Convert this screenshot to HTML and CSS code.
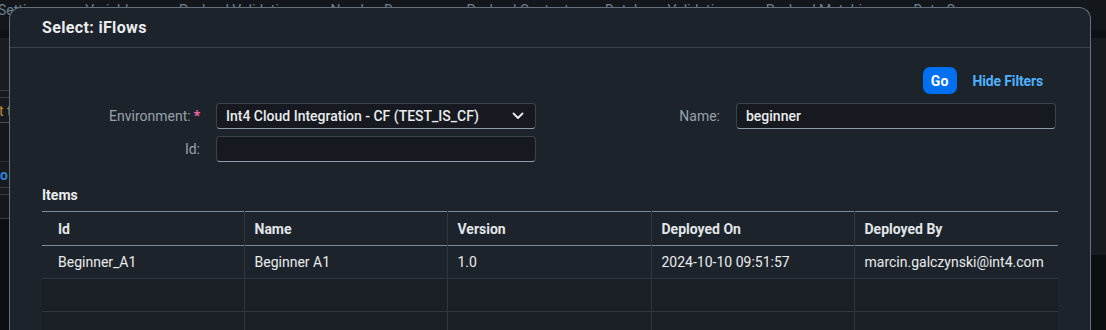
FILE: index.html
```html
<!DOCTYPE html>
<html lang="en">
<head>
<meta charset="utf-8">
<title>Select: iFlows</title>
<link rel="stylesheet" href="styles.css">
</head>
<body>
<div class="page">
  <div class="tabs">
    <span class="tab">Settings</span>
    <span class="tab">Variables</span>
    <span class="tab">Payload Validation</span>
    <span class="tab">Number Ranges</span>
    <span class="tab">Payload Content</span>
    <span class="tab">Database Validation</span>
    <span class="tab">Payload Matching</span>
    <span class="tab">Data Compare</span>
  </div>
  <div class="band"></div>
  <div class="page-body">
    <div class="left-panel">
      <div class="lp-row lp-a"><span class="lp-text lp-white">E</span></div>
      <div class="lp-row lp-b"></div>
      <div class="lp-row lp-c"><span class="lp-text lp-orange">t t</span></div>
      <div class="lp-row lp-d"></div>
      <div class="lp-row lp-e"><span class="lp-text lp-blue">o</span></div>
      <div class="lp-row lp-f"></div>
      <div class="lp-row lp-g"></div>
      <div class="lp-row lp-h"></div>
    </div>
    <div class="main-area">
      <div class="main-top"></div>
      <div class="main-bottom"></div>
    </div>
  </div>
</div>

<div class="dialog">
  <div class="dialog-header">
    <h1 class="dialog-title">Select: iFlows</h1>
  </div>
  <div class="dialog-content">
    <div class="filter-toolbar">
      <button class="btn-go">Go</button>
      <a class="link-btn">Hide Filters</a>
    </div>
    <div class="filter-grid">
      <div class="form-item">
        <label class="form-label">Environment:<span class="req">*</span></label>
        <div class="field select">
          <span class="field-text">Int4 Cloud Integration - CF (TEST_IS_CF)</span>
          <svg class="chev" width="12" height="8" viewBox="0 0 12 8"><path d="M1.5 1.5 L6 6 L10.5 1.5" fill="none" stroke="#eaecee" stroke-width="1.8" stroke-linecap="round" stroke-linejoin="round"/></svg>
        </div>
      </div>
      <div class="form-item">
        <label class="form-label">Name:</label>
        <div class="field"><span class="field-text">beginner</span></div>
      </div>
      <div class="form-item">
        <label class="form-label">Id:</label>
        <div class="field"></div>
      </div>
    </div>

    <h2 class="items-title">Items</h2>
    <table class="items-table">
      <colgroup>
        <col class="c1"><col class="c2"><col class="c3"><col class="c4"><col class="c5">
      </colgroup>
      <thead>
        <tr>
          <th class="first">Id</th>
          <th>Name</th>
          <th>Version</th>
          <th>Deployed On</th>
          <th>Deployed By</th>
        </tr>
      </thead>
      <tbody>
        <tr>
          <td class="first">Beginner_A1</td>
          <td>Beginner A1</td>
          <td>1.0</td>
          <td>2024-10-10 09:51:57</td>
          <td>marcin.galczynski@int4.com</td>
        </tr>
        <tr class="empty">
          <td class="first"></td><td></td><td></td><td></td><td></td>
        </tr>
        <tr class="empty">
          <td class="first"></td><td></td><td></td><td></td><td></td>
        </tr>
      </tbody>
    </table>
  </div>
</div>
</body>
</html>
```

FILE: styles.css
```css
* { box-sizing: border-box; }

html, body {
  margin: 0;
  padding: 0;
  width: 1106px;
  height: 330px;
  overflow: hidden;
  background: #12161b;
  font-family: Roboto, "Liberation Sans", Arial, sans-serif;
  font-size: 14px;
  color: #eaecee;
}

/* ---------- background page ---------- */
.page {
  width: 1106px;
  height: 330px;
  display: flex;
  flex-direction: column;
}

.tabs {
  height: 30px;
  display: flex;
  gap: 36px;
  margin-left: -2px;
  background: #13171c;
  white-space: nowrap;
  overflow: hidden;
}

.tab {
  font-size: 14px;
  line-height: 14px;
  color: #6f7f90;
  padding-top: 3px;
}

.band {
  height: 8px;
  background: #0d1014;
}

.page-body {
  flex: 1;
  display: flex;
}

.left-panel {
  width: 60px;
  display: flex;
  flex-direction: column;
  background: #171b20;
}

.lp-row {
  border-bottom: 1px solid #353c44;
  overflow: hidden;
}
.lp-a { height: 53px; background: #191d22; }
.lp-b { height: 7px; }
.lp-c { height: 25px; border-bottom-color: #4a525c; }
.lp-d { height: 39px; background: #14181c; border-bottom-color: #2a3038; }
.lp-e { height: 26px; }
.lp-f { height: 7px; }
.lp-g { height: 24px; background: #14181c; }
.lp-h { height: 36px; background: #0c0f12; border-bottom: 0; flex: 1; }

.lp-text {
  display: block;
  font-size: 14px;
  line-height: 16px;
}
.lp-a .lp-text { padding: 33px 0 0 9px; }
.lp-c .lp-text { padding: 5px 0 0 0; margin-left: -1px; }
.lp-e .lp-text { padding: 5px 0 0 0; }
.lp-white { color: #c5d1dc; }
.lp-orange { color: #c0893a; }
.lp-blue { color: #2f84d6; font-weight: 700; }

.main-area {
  flex: 1;
  display: flex;
  flex-direction: column;
}
.main-top { height: 217px; background: #171b20; }
.main-bottom { flex: 1; background: #0c0f12; }

/* ---------- dialog ---------- */
.dialog {
  position: absolute;
  left: 9px;
  top: 7px;
  width: 1082px;
  height: 323px;
  overflow: hidden;
  background: #1d232a;
  border: 1px solid #66707b;
  border-bottom: 0;
  border-radius: 12px 12px 0 0;
}

.dialog-header {
  height: 40px;
  display: flex;
  align-items: center;
  padding-left: 32px;
  border-bottom: 1px solid #3a424c;
}

.dialog-title {
  margin: 0;
  font-size: 16px;
  letter-spacing: 0.35px;
  font-weight: 700;
  color: #eaecee;
}

.dialog-content {
  padding: 19px 31px 0 32px;
}

.filter-toolbar {
  display: flex;
  justify-content: flex-end;
  align-items: center;
  gap: 15px;
  padding-right: 16px;
  height: 27px;
}

.btn-go {
  width: 34px;
  height: 27px;
  border: 0;
  border-radius: 7px;
  background: #0070f2;
  color: #ffffff;
  font-family: inherit;
  font-size: 14px;
  font-weight: 700;
  padding: 0;
  margin-right: 1px;
}

.link-btn {
  color: #4db1ff;
  font-weight: 700;
  font-size: 14px;
  letter-spacing: -0.15px;
}

.filter-grid {
  margin-top: 9px;
  display: grid;
  grid-template-columns: 498px 498px;
  column-gap: 22px;
  row-gap: 7px;
}

.form-item {
  display: flex;
  align-items: center;
  padding-right: 4px;
}

.form-label {
  flex: 1;
  text-align: right;
  padding-right: 16px;
  color: #96a1ad;
  font-size: 14px;
}

.req {
  color: #f36bab;
  font-weight: 700;
  margin-left: 3px;
}

.field {
  width: 320px;
  height: 26px;
  display: flex;
  align-items: center;
  padding: 0 10px 0 9px;
  background: #161a20;
  border: 1px solid #3b434d;
  border-bottom-color: #8f9caa;
  border-radius: 4px;
}

.field-text {
  flex: 1;
  color: #eaecee;
  font-size: 14px;
  font-weight: 500;
  white-space: nowrap;
}

.select .chev { margin-right: 1px; }

.items-title {
  margin: 25px 0 0 0;
  height: 24px;
  font-size: 14px;
  font-weight: 700;
  color: #eaecee;
}

.items-table {
  width: 1016px;
  border-collapse: collapse;
  table-layout: fixed;
}

col.c1 { width: 202px; }
col.c2 { width: 203px; }
col.c3 { width: 204px; }
col.c4 { width: 203px; }
col.c5 { width: 204px; }

.items-table thead tr {
  height: 34px;
  border-top: 1px solid #7d8a98;
  border-bottom: 1px solid #7d8a98;
}

.items-table th {
  text-align: left;
  font-weight: 700;
  font-size: 14px;
  color: #e2e6ea;
  padding: 0 10px;
  border-left: 1px solid #30373f;
}

.items-table td {
  height: 33px;
  padding: 0 10px;
  font-size: 14px;
  color: #eaecee;
  border-left: 1px solid #30373f;
  border-bottom: 1px solid #30373f;
  white-space: nowrap;
}

.items-table th.first,
.items-table td.first {
  border-left: 0;
  padding-left: 16px;
}

.items-table tr.empty td {
  background: #1a1f25;
}
```
